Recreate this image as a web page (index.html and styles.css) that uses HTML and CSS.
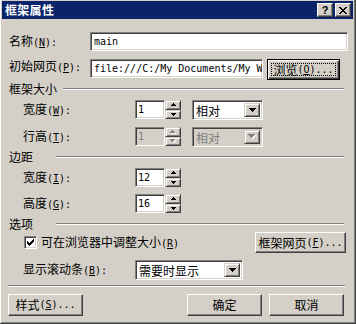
FILE: index.html
```html
<!DOCTYPE html>
<html>
<head>
<meta charset="utf-8">
<link rel="stylesheet" href="styles.css">
</head>
<body>
<div class="window">
  <div class="titlebar">
    <span class="title">框架属性</span>
    <span class="caps">
      <span class="capbtn help">?</span>
      <span class="capbtn"><svg width="8" height="7" viewBox="0 0 8 7"><path d="M0 0h2v1H0zM6 0h2v1H6zM1 1h2v1H1zM5 1h2v1H5zM2 2h4v1H2zM3 3h2v1H3zM2 4h4v1H2zM1 5h2v1H1zM5 5h2v1H5zM0 6h2v1H0zM6 6h2v1H6z"/></svg></span>
    </span>
  </div>
  <div class="content">
    <div class="row r1">
      <span class="lbl main-lbl">名称<span class="lat">(<u>N</u>):</span></span>
      <div class="field name mono">main</div>
    </div>
    <div class="row r2">
      <span class="lbl main-lbl">初始网页<span class="lat">(<u>P</u>):</span></span>
      <div class="field url mono">file:///C:/My Documents/My W</div>
      <div class="btn default browse">浏览<span class="lat">(<u>O</u>)...</span></div>
    </div>

    <div class="group g1"><span class="glabel wide">框架大小</span><span class="gline"></span></div>

    <div class="row r3">
      <span class="lbl sub-lbl">宽度<span class="lat">(<u>W</u>):</span></span>
      <div class="spin">
        <div class="field num mono">1</div>
        <div class="spinbtns">
          <span class="sb"><svg width="5" height="3" viewBox="0 0 5 3"><path d="M2 0h1v1H2zM1 1h3v1H1zM0 2h5v1H0z"/></svg></span>
          <span class="sb"><svg width="5" height="3" viewBox="0 0 5 3"><path d="M0 0h5v1H0zM1 1h3v1H1zM2 2h1v1H2z"/></svg></span>
        </div>
      </div>
      <div class="select unit">
        <span class="val">相对</span>
        <span class="dd"><svg width="7" height="4" viewBox="0 0 7 4"><path d="M0 0h7v1H0zM1 1h5v1H1zM2 2h3v1H2zM3 3h1v1H3z"/></svg></span>
      </div>
    </div>

    <div class="row r4">
      <span class="lbl sub-lbl">行高<span class="lat">(<u>T</u>):</span></span>
      <div class="spin disabled">
        <div class="field num mono">1</div>
        <div class="spinbtns">
          <span class="sb"><svg width="6" height="4" viewBox="0 0 6 4"><path class="sh" d="M3 1h1v1H3zM2 2h3v1H2zM1 3h5v1H1z"/><path class="fg" d="M2 0h1v1H2zM1 1h3v1H1zM0 2h5v1H0z"/></svg></span>
          <span class="sb"><svg width="6" height="4" viewBox="0 0 6 4"><path class="sh" d="M1 1h5v1H1zM2 2h3v1H2zM3 3h1v1H3z"/><path class="fg" d="M0 0h5v1H0zM1 1h3v1H1zM2 2h1v1H2z"/></svg></span>
        </div>
      </div>
      <div class="select unit disabled">
        <span class="val">相对</span>
        <span class="dd"><svg width="8" height="5" viewBox="0 0 8 5"><path class="sh" d="M1 1h7v1H1zM2 2h5v1H2zM3 3h3v1H3zM4 4h1v1H4z"/><path class="fg" d="M0 0h7v1H0zM1 1h5v1H1zM2 2h3v1H2zM3 3h1v1H3z"/></svg></span>
      </div>
    </div>

    <div class="group g2"><span class="glabel">边距</span><span class="gline"></span></div>

    <div class="row r5">
      <span class="lbl sub-lbl">宽度<span class="lat">(<u>I</u>):</span></span>
      <div class="spin">
        <div class="field num mono">12</div>
        <div class="spinbtns">
          <span class="sb"><svg width="5" height="3" viewBox="0 0 5 3"><path d="M2 0h1v1H2zM1 1h3v1H1zM0 2h5v1H0z"/></svg></span>
          <span class="sb"><svg width="5" height="3" viewBox="0 0 5 3"><path d="M0 0h5v1H0zM1 1h3v1H1zM2 2h1v1H2z"/></svg></span>
        </div>
      </div>
    </div>

    <div class="row r6">
      <span class="lbl sub-lbl">高度<span class="lat">(<u>G</u>):</span></span>
      <div class="spin">
        <div class="field num mono">16</div>
        <div class="spinbtns">
          <span class="sb"><svg width="5" height="3" viewBox="0 0 5 3"><path d="M2 0h1v1H2zM1 1h3v1H1zM0 2h5v1H0z"/></svg></span>
          <span class="sb"><svg width="5" height="3" viewBox="0 0 5 3"><path d="M0 0h5v1H0zM1 1h3v1H1zM2 2h1v1H2z"/></svg></span>
        </div>
      </div>
    </div>

    <div class="group g3"><span class="glabel">选项</span><span class="gline"></span></div>

    <div class="row r7">
      <span class="check"><svg width="7" height="7" viewBox="0 0 7 7"><path d="M6 0h1v1H6zM5 1h2v1H5zM0 2h1v1H0zM4 2h3v1H4zM0 3h2v1H0zM3 3h3v1H3zM0 4h5v1H0zM1 5h3v1H1zM2 6h1v1H2z"/></svg></span>
      <span class="check-lbl">可在浏览器中调整大小<span class="lat">(<u>R</u>)</span></span>
      <div class="btn frames">框架网页<span class="lat">(<u>F</u>)...</span></div>
    </div>

    <div class="row r8">
      <span class="lbl sub-lbl">显示滚动条<span class="lat">(<u>B</u>):</span></span>
      <div class="select scroll">
        <span class="val">需要时显示</span>
        <span class="dd"><svg width="7" height="4" viewBox="0 0 7 4"><path d="M0 0h7v1H0zM1 1h5v1H1zM2 2h3v1H2zM3 3h1v1H3z"/></svg></span>
      </div>
    </div>

    <div class="sep"></div>

    <div class="row r9">
      <div class="btn dlg">样式<span class="lat">(<u>S</u>)...</span></div>
      <div class="btn dlg ok">确定</div>
      <div class="btn dlg cancel">取消</div>
    </div>
  </div>
</div>
</body>
</html>
```
FILE: styles.css
```css
html, body {
  margin: 0;
  padding: 0;
}
body {
  width: 356px;
  height: 324px;
  overflow: hidden;
  background: #d4d0c8;
  font-family: "Noto Sans CJK SC", sans-serif;
  font-size: 12px;
  color: #000;
}
.window {
  box-sizing: border-box;
  width: 357px;
  height: 326px;
  margin: -2px 0 0 -1px;
  background: #d4d0c8;
  border: 1px solid;
  border-color: #d4d0c8 #404040 #404040 #d4d0c8;
  box-shadow: inset 1px 1px #fff, inset -1px -1px #808080;
  padding: 2px;
  display: flex;
  flex-direction: column;
}
.titlebar {
  height: 18px;
  background: #0a246a;
  color: #fff;
  display: flex;
  align-items: center;
  padding-left: 3px;
}
.title {
  font-weight: bold;
  font-size: 12px;
  line-height: 14px;
  letter-spacing: 0.3px;
}
.caps {
  margin-left: auto;
  margin-right: 2px;
  display: flex;
  gap: 2px;
}
.capbtn {
  box-sizing: border-box;
  width: 16px;
  height: 14px;
  background: #d4d0c8;
  border: 1px solid;
  border-color: #fff #404040 #404040 #fff;
  box-shadow: inset -1px -1px #808080;
  display: flex;
  align-items: center;
  justify-content: center;
  color: #000;
}
.capbtn.help {
  font-family: "Liberation Sans", sans-serif;
  font-weight: bold;
  font-size: 11px;
  line-height: 11px;
}
.content {
  flex: 1;
  display: flex;
  flex-direction: column;
  padding: 13px 7px 0 7px;
}
.row {
  display: flex;
  align-items: center;
  height: 19px;
}
.lat {
  font-family: "DejaVu Sans Mono", monospace;
  font-size: 10px;
}
.mono {
  font-family: "DejaVu Sans Mono", monospace;
  font-size: 10px;
}
.lbl {
  box-sizing: border-box;
  white-space: nowrap;
  line-height: 14px;
}
.main-lbl { width: 81px; }
.sub-lbl { width: 126px; padding-left: 14px; }

.field {
  box-sizing: border-box;
  height: 19px;
  background: #fff;
  border: 1px solid;
  border-color: #808080 #fff #fff #808080;
  box-shadow: inset 1px 1px #404040, inset -1px -1px #d4d0c8;
  padding: 0 3px;
  line-height: 17px;
  white-space: nowrap;
  overflow: hidden;
}
.field.name { flex: 1; margin-right: -2px; }
.field.url { width: 173px; align-self: flex-start; }

.btn {
  box-sizing: border-box;
  background: #d4d0c8;
  border: 1px solid;
  border-color: #fff #404040 #404040 #fff;
  box-shadow: inset -1px -1px #808080;
  display: flex;
  align-items: center;
  justify-content: center;
  white-space: nowrap;
  line-height: 14px;
  position: relative;
}
.btn.default {
  border: 1px solid #000;
  box-shadow: inset 1px 1px #fff, inset -1px -1px #404040, inset -2px -2px #808080;
}
.btn.default::after {
  content: "";
  position: absolute;
  left: 3px; top: 3px; right: 3px; bottom: 3px;
  border: 1px dotted #000;
}
.r2 { margin-top: 8px; height: 21px; align-items: flex-start; }
.browse { width: 73px; height: 21px; margin-left: 4px; }

.group {
  display: flex;
  align-items: center;
  height: 12px;
  line-height: 12px;
}
.glabel { min-width: 41px; }
.glabel.wide { min-width: 48px; }
.gline {
  flex: 1;
  margin-left: 6px;
  margin-right: 2px;
  border-top: 1px solid #808080;
  border-bottom: 1px solid #fff;
  height: 0;
}
.g1 { margin-top: 3px; }
.r3 { margin-top: 5px; }
.r4 { margin-top: 8px; }
.g2 { margin-top: 5px; }
.r5 { margin-top: 5px; }
.r6 { margin-top: 7px; }
.g3 { margin-top: 5px; }
.r7 { margin-top: 2px; height: 21px; }
.r8 { margin-top: 7px; }
.sep {
  margin: 6px 1px 0 -1px;
  border-top: 1px solid #808080;
  border-bottom: 1px solid #fff;
}
.r9 { margin-top: 7px; height: 22px; }

.spin { display: flex; height: 19px; }
.field.num { width: 30px; padding-left: 2px; }
.spinbtns {
  width: 16px;
  display: flex;
  flex-direction: column;
}
.sb {
  box-sizing: border-box;
  flex: 1;
  background: #d4d0c8;
  border: 1px solid;
  border-color: #d4d0c8 #404040 #404040 #d4d0c8;
  box-shadow: inset 1px 1px #fff, inset -1px -1px #808080;
  display: flex;
  align-items: center;
  justify-content: center;
}
.disabled .field { background: #d4d0c8; color: #808080; }
.disabled .fg { fill: #808080; }
.sh { fill: #fff; }

.select {
  box-sizing: border-box;
  height: 20px;
  display: flex;
  background: #fff;
  border: 1px solid;
  border-color: #808080 #fff #fff #808080;
  box-shadow: inset 1px 1px #404040, inset -1px -1px #d4d0c8;
  padding: 2px;
}
.select .val {
  flex: 1;
  line-height: 15px;
  padding-left: 1px;
  white-space: nowrap;
}
.select .dd {
  box-sizing: border-box;
  width: 16px;
  background: #d4d0c8;
  border: 1px solid;
  border-color: #d4d0c8 #404040 #404040 #d4d0c8;
  box-shadow: inset 1px 1px #fff, inset -1px -1px #808080;
  display: flex;
  align-items: center;
  justify-content: center;
}
.select.disabled { background: #d4d0c8; }
.select.disabled .val { color: #808080; }
.unit { width: 71px; margin-left: 11px; }
.scroll { width: 108px; }

.check {
  box-sizing: border-box;
  width: 13px;
  height: 13px;
  margin-left: 15px;
  background: #fff;
  border: 1px solid;
  border-color: #808080 #fff #fff #808080;
  box-shadow: inset 1px 1px #404040, inset -1px -1px #d4d0c8;
  display: flex;
  align-items: center;
  justify-content: center;
}
.check-lbl { margin-left: 4px; line-height: 14px; white-space: nowrap; }
.frames { width: 91px; height: 21px; margin-left: auto; }

.dlg { width: 75px; height: 22px; }
.dlg:first-child { margin-left: -1px; }
.ok { margin-left: auto; }
.cancel { margin-left: 7px; margin-right: 2px; }
```
